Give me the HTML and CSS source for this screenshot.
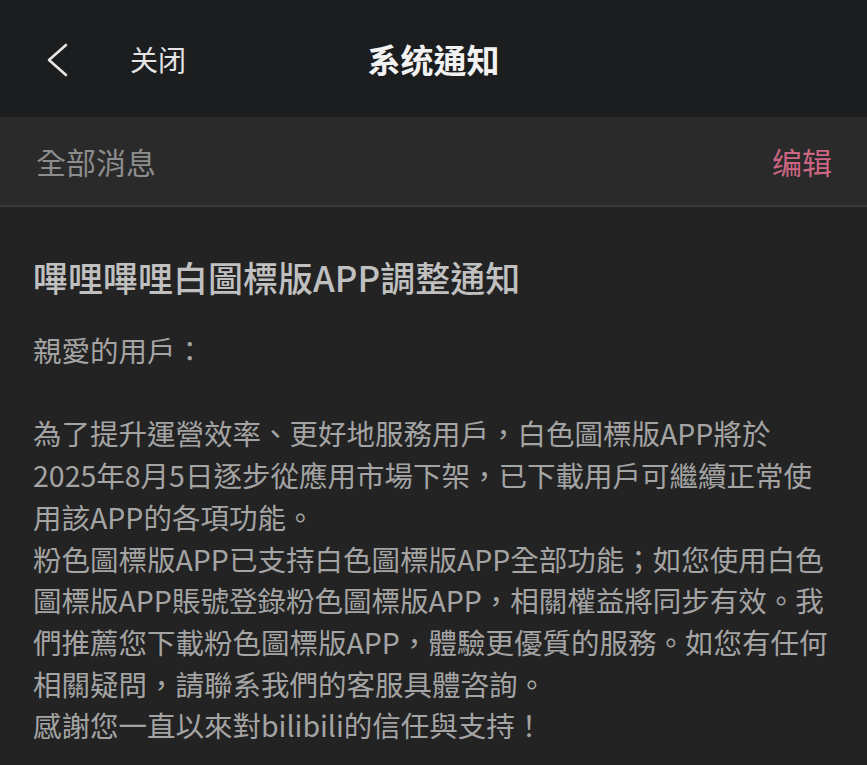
FILE: index.html
```html
<!DOCTYPE html>
<html lang="zh-Hant">

<head>
  <meta charset="UTF-8">
  <meta name="viewport" content="width=device-width, initial-scale=1.0">
  <title>系统通知</title>
  <link rel="stylesheet" href="styles.css">
</head>

<body>
  <div class="page">
    <div class="top-bar">
      <div class="top-left">
        <svg class="back" width="24" height="36" viewBox="0 0 24 36">
          <polyline points="20,3 3,18 20,33" fill="none" stroke="#e6e6e6" stroke-width="2.6" stroke-linecap="round" stroke-linejoin="round" />
        </svg>
        <span class="close">关闭</span>
      </div>
      <div class="top-title">系统通知</div>
      <div class="top-right"></div>
    </div>

    <div class="tab-bar">
      <span class="tab-name">全部消息</span>
      <span class="edit">编辑</span>
    </div>

    <div class="msg">
      <h1 class="msg-title">嗶哩嗶哩白圖標版APP調整通知</h1>
      <div class="msg-body">
        <p>親愛的用戶：</p>
        <p class="blank"></p>
        <p>為了提升運營效率、更好地服務用戶，白色圖標版APP將於2025年8月5日逐步從應用市場下架，已下載用戶可繼續正常使用該APP的各項功能。</p>
        <p>粉色圖標版APP已支持白色圖標版APP全部功能；如您使用白色圖標版APP賬號登錄粉色圖標版APP，相關權益將同步有效。我們推薦您下載粉色圖標版APP，體驗更優質的服務。如您有任何相關疑問，請聯系我們的客服具體咨詢。</p>
        <p>感謝您一直以來對bilibili的信任與支持！</p>
      </div>
    </div>
  </div>
</body>

</html>
```

FILE: styles.css
```css
* {
  margin: 0;
  padding: 0;
  box-sizing: border-box;
}

html,
body {
  height: 100%;
}

body {
  background-color: #232323;
  font-family: "Noto Sans CJK SC", "Noto Sans CJK TC", "Noto Sans", sans-serif;
}

.page {
  width: 867px;
  min-height: 765px;
  background-color: #232323;
}

/* 顶部导航 */
.top-bar {
  height: 117px;
  background-color: #1c1d1f;
  display: grid;
  grid-template-columns: 1fr auto 1fr;
  align-items: center;
}

.top-left {
  display: flex;
  align-items: center;
  padding-left: 46px;
}

.back {
  display: block;
  margin-top: 2px;
}

.close {
  margin-left: 60px;
  font-size: 28px;
  color: #e4e4e4;
}

.top-title {
  font-size: 33px;
  font-weight: 700;
  color: #f2f2f2;
}

/* 分类栏 */
.tab-bar {
  height: 90px;
  background-color: #2a2a2a;
  border-bottom: 2px solid #383838;
  display: flex;
  align-items: center;
  justify-content: space-between;
  padding: 0 35px 0 36px;
}

.tab-name {
  font-size: 30px;
  color: #8d8d8d;
}

.edit {
  font-size: 30px;
  color: #cc6682;
}

/* 消息内容 */
.msg {
  padding: 49px 37px 0 33px;
}

.msg-title {
  font-size: 35px;
  font-weight: 500;
  line-height: 42px;
  color: #c0c0c0;
}

.msg-body {
  margin-top: 31px;
  font-size: 28.5px;
  line-height: 41.7px;
  color: #a4a4a4;
}

.msg-body .blank {
  height: 41.7px;
}
```
